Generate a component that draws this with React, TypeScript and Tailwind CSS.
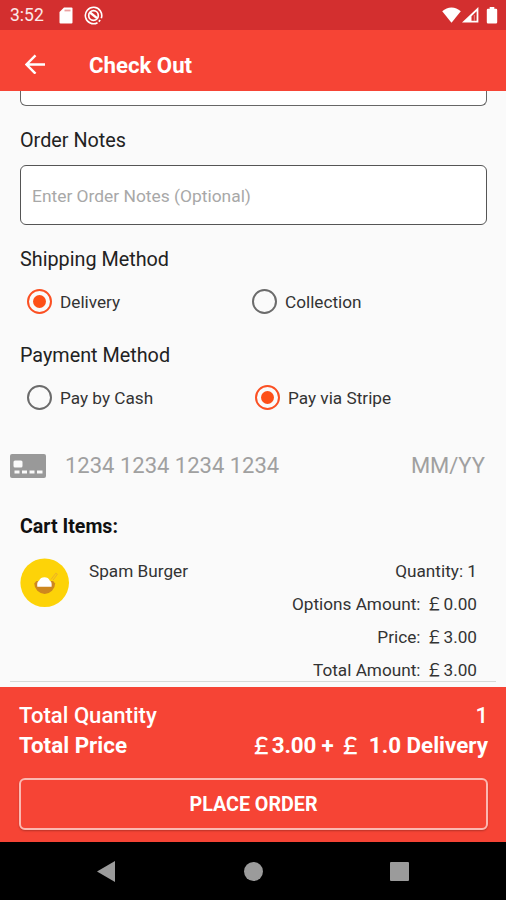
import { ReactNode } from 'react'
import clsx from 'clsx'

const AMOUNTS = [
  { label: 'Options Amount:', value: '0.00' },
  { label: 'Price:', value: '3.00' },
  { label: 'Total Amount:', value: '3.00' },
]

function StatusBar() {
  return (
    <div className="flex h-[30px] shrink-0 items-center bg-[#d32f2f] pr-2 pl-[10px]">
      <span className="w-[49px] pt-px text-[17.5px] leading-[29px] text-white/90">3:52</span>
      {/* SD card */}
      <svg width="14" height="17" viewBox="0 0 14 17" fill="#fff">
        <path d="M5 0.5h7.5a1 1 0 0 1 1 1v14a1 1 0 0 1-1 1h-11a1 1 0 0 1-1-1V5z" />
        <path d="M5.5 3.5h6" stroke="#d32f2f" strokeOpacity=".45" strokeWidth="1.8" />
      </svg>
      {/* Data saver */}
      <svg className="ml-[11px]" width="19" height="19" viewBox="0 0 19 19" fill="none" stroke="#fff">
        <path d="M13.5 16.7A8.2 8.2 0 1 1 17.3 12.2" strokeWidth="1.6" />
        <path d="M14.8 15.6l1.4-1.6" strokeWidth="1.6" />
        <circle cx="9.5" cy="9.5" r="4.8" strokeWidth="1.7" />
        <path d="M6 6.5l7 5.6" strokeWidth="2.4" />
      </svg>
      <svg className="ml-auto" width="19" height="16" viewBox="0 0 19 16" fill="#fff">
        <path d="M9.5 15.7L0.2 4.2C5.5-.9 13.5-.9 18.8 4.2z" />
      </svg>
      <svg className="ml-px" width="17" height="16" viewBox="0 0 17 16">
        <path d="M0 15.6L16.4 0v15.6z" fill="#fff" />
        <path d="M9.5 13.7V9.2L14.6 4.2v9.5z" fill="#d32f2f" />
        <path d="M12.3 8v5.7" stroke="#fff" strokeOpacity=".45" />
      </svg>
      <svg className="ml-[7px]" width="12" height="17" viewBox="0 0 12 17" fill="#fff">
        <path d="M3.7 0h4.6v1.7H10a1.2 1.2 0 0 1 1.2 1.2v12.4A1.2 1.2 0 0 1 10 16.5H2a1.2 1.2 0 0 1-1.2-1.2V2.9A1.2 1.2 0 0 1 2 1.7h1.7z" />
      </svg>
    </div>
  )
}

function Header() {
  return (
    <header className="flex h-[61px] shrink-0 items-center bg-[#f64435] pt-[7px] pl-[25px]">
      <svg width="20" height="20" viewBox="0 0 20 20" fill="none" stroke="#fff" strokeWidth="2.4">
        <path d="M20 10.5H2M10.5 1.3L1.5 10.5l9 9.2" />
      </svg>
      <h1 className="ml-[44px] pt-px text-[22.2px] leading-7 font-bold">Check Out</h1>
    </header>
  )
}

function Heading({ children }: { children: ReactNode }) {
  return <h2 className="px-5 text-[19.8px] leading-6 text-[#222]">{children}</h2>
}

function Radio({ label, checked }: { label: string; checked?: boolean }) {
  return (
    <label className="flex items-center">
      <span
        className={clsx(
          'flex size-[25px] items-center justify-center rounded-full border-[2.5px]',
          checked ? 'border-[#fb5023]' : 'border-[#6b6b6b]',
        )}
      >
        {checked && <span className="size-[13px] rounded-full bg-[#fd4f17]" />}
      </span>
      <span className="mt-px ml-2 text-[17.2px] leading-6 text-[#333]">{label}</span>
    </label>
  )
}

// Full-width pound sign, as the Android fallback font draws it
function Pound({ className }: { className?: string }) {
  return <span className={clsx("font-['Noto_Sans_CJK_SC',sans-serif]", className)}>￡</span>
}

function CartItem() {
  return (
    <div className="mx-[10px] mt-[17px] flex h-[126px] border-b border-[#d6d9d8] pr-[19px] pl-[10px]">
      <svg className="mt-[2px] shrink-0" width="49" height="49" viewBox="0 0 49 49">
        <circle cx="24.7" cy="24.7" r="24.3" fill="#fdd308" />
        <path d="M31 21.5l4.8-6.3 1.6 1-4.4 6" fill="none" stroke="#eab02a" strokeWidth="1" />
        <path d="M14.3 25.5a10.4 10.4 0 0 0 20.8 0l-2-2.5H16.3z" fill="#cd871f" />
        <path d="M17.3 28.8c-.3-3.2 0-5.3 1.8-6 1.3-4.6 9.4-4.6 10.7 0 1.8.7 2.1 2.8 1.8 6z" fill="#fff" />
      </svg>
      <div className="ml-5 text-[17.2px] leading-[31px] text-[#333]">Spam Burger</div>
      <div className="ml-auto flex flex-col items-end gap-[3px] text-[17.2px] leading-[31px] text-[#333]">
        <div className="h-[30px]">Quantity: 1</div>
        {AMOUNTS.map(({ label, value }) => (
          <div key={label} className="flex h-[30px]">
            <span className="mr-[5px]">{label}</span>
            <Pound className="w-[18px] text-[17.5px] leading-[28px]" />
            <span>{value}</span>
          </div>
        ))}
      </div>
    </div>
  )
}

function Summary() {
  return (
    <footer className="h-[155px] shrink-0 bg-[#f64435] pt-[13px] pr-[18px] pl-[19px]">
      <div className="flex justify-between text-[22.1px] leading-[30px] font-medium">
        <span>Total Quantity</span>
        <span>1</span>
      </div>
      <div className="mt-px flex justify-between text-[22.4px] leading-[28px] font-bold">
        <span>Total Price</span>
        <span className="flex whitespace-pre">
          <Pound className="w-[22px] text-[23px] leading-[26px] font-medium" />
          <span className="tracking-[-0.2px]">3.00 + </span>
          <Pound className="w-[30px] text-[23px] leading-[26px] font-medium" />
          <span>1.0 Delivery</span>
        </span>
      </div>
      <button className="mt-[19px] block h-[52px] w-[469px] rounded-md border-2 border-[#fbb8b1] pt-px text-[19.7px] font-bold shadow-[0_1px_2px_rgba(0,0,0,0.25)]">
        PLACE ORDER
      </button>
    </footer>
  )
}

function NavBar() {
  return (
    <nav className="flex h-[58px] shrink-0 items-center bg-black pl-[97px]">
      <svg width="18" height="21" viewBox="0 0 18 21" fill="#9b9b9b">
        <path d="M0 10.5L18 0v21z" />
      </svg>
      <span className="ml-[129px] size-[19px] rounded-full bg-[#9b9b9b]" />
      <span className="ml-[127px] size-[19px] rounded-[1px] bg-[#9b9b9b]" />
    </nav>
  )
}

export default function App() {
  return (
    <div className="flex h-[900px] w-[506px] flex-col overflow-hidden bg-[#fafafa] font-[Roboto,sans-serif] text-white">
      <StatusBar />
      <Header />

      <main className="h-[596px] shrink-0 overflow-hidden">
        {/* Previous field, scrolled under the header */}
        <div className="mr-[19px] ml-5 h-[15px] rounded-b-md border border-t-0 border-[#666] bg-white" />

        <div className="mt-[23px]">
          <Heading>Order Notes</Heading>
        </div>
        <div className="mt-[12px] mr-[19px] ml-5 flex h-[60px] items-center rounded-md border border-[#555] bg-white pt-[3px] pl-[11px] text-[17.4px] text-[#a8a8a8]">
          Enter Order Notes (Optional)
        </div>

        {/* Shipping */}
        <div className="mt-[23px]">
          <Heading>Shipping Method</Heading>
        </div>
        <div className="mt-[17px] flex h-[25px] pl-[27px]">
          <div className="w-[225px]">
            <Radio label="Delivery" checked />
          </div>
          <Radio label="Collection" />
        </div>

        {/* Payment */}
        <div className="mt-[30px]">
          <Heading>Payment Method</Heading>
        </div>
        <div className="mt-[17px] flex h-[25px] pl-[27px]">
          <div className="w-[228px]">
            <Radio label="Pay by Cash" />
          </div>
          <Radio label="Pay via Stripe" checked />
        </div>

        {/* Card */}
        <div className="mt-[41px] flex h-[30px] items-center pr-[21px] pl-[10px] text-[22px] leading-[28px] text-[#a0a0a0]">
          <svg width="36" height="24" viewBox="0 0 36 24">
            <rect width="36" height="24" rx="2" fill="#999" />
            <rect x="3.5" y="6.5" width="9" height="7" rx="1.5" fill="#fafafa" />
            <path d="M4.5 18h5M12 18h5M19.5 18h5M27 18h5.5" stroke="#fafafa" strokeWidth="3" />
          </svg>
          <span className="ml-[19px] pb-px">1234 1234 1234 1234</span>
          <span className="ml-auto pb-px">MM/YY</span>
        </div>

        {/* Cart */}
        <div className="mt-[34px] px-5 text-[19.6px] leading-6 font-bold text-[#111]">Cart Items:</div>
        <CartItem />
      </main>

      <Summary />
      <NavBar />
    </div>
  )
}
